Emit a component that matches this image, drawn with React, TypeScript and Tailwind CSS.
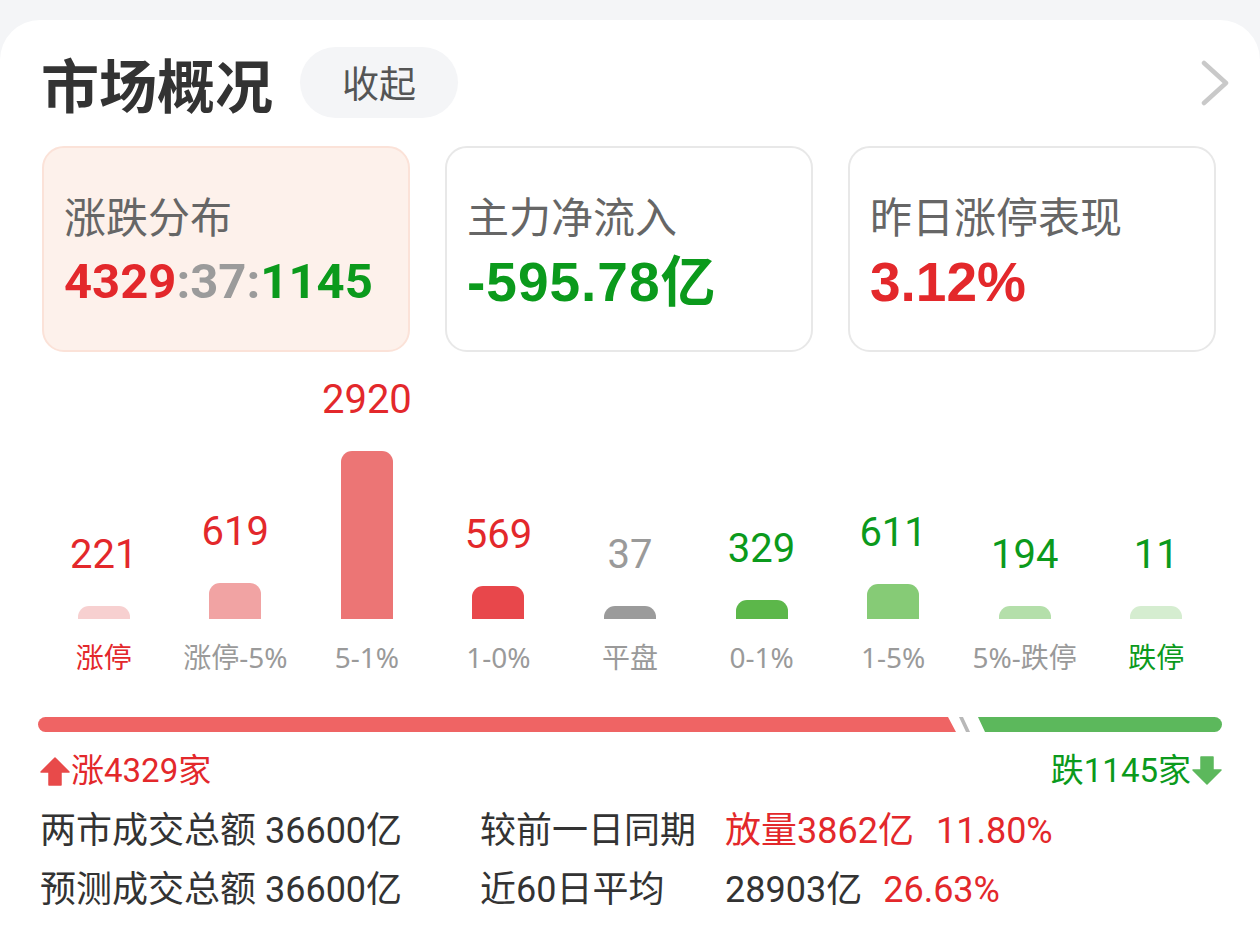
import React from "react";

type Bucket = {
  label: string;
  count: number;
  height: number;
  bar: string;
  num: string;
  labelColor: string;
};

const RED = "text-[#e3282b]";
const GREEN = "text-[#0b9a1c]";
const GRAY = "text-[#9a9a9a]";

const buckets: Bucket[] = [
  { label: "涨停", count: 221, height: 13, bar: "bg-[#f7d0d0]", num: RED, labelColor: RED },
  { label: "涨停-5%", count: 619, height: 36, bar: "bg-[#f1a3a3]", num: RED, labelColor: GRAY },
  { label: "5-1%", count: 2920, height: 168, bar: "bg-[#ec7575]", num: RED, labelColor: GRAY },
  { label: "1-0%", count: 569, height: 33, bar: "bg-[#e8474b]", num: RED, labelColor: GRAY },
  { label: "平盘", count: 37, height: 13, bar: "bg-[#9b9b9b]", num: GRAY, labelColor: GRAY },
  { label: "0-1%", count: 329, height: 19, bar: "bg-[#5cb74a]", num: GREEN, labelColor: GRAY },
  { label: "1-5%", count: 611, height: 35, bar: "bg-[#86cb76]", num: GREEN, labelColor: GRAY },
  { label: "5%-跌停", count: 194, height: 13, bar: "bg-[#b4dfaa]", num: GREEN, labelColor: GRAY },
  { label: "跌停", count: 11, height: 13, bar: "bg-[#d5edd0]", num: GREEN, labelColor: GREEN },
];

function ChevronRight() {
  return (
    <svg width="30" height="46" viewBox="0 0 30 46" fill="none">
      <polyline
        points="4,3 26,23 4,43"
        stroke="#c9c9c9"
        strokeWidth="4.5"
        strokeLinecap="round"
        strokeLinejoin="round"
      />
    </svg>
  );
}

function ArrowUp() {
  return (
    <svg width="30" height="30" viewBox="0 0 30 30">
      <path d="M15 2 L29 16 H21 V29 H9 V16 H1 Z" fill="#e84a4a" strokeLinejoin="round" stroke="#e84a4a" strokeWidth="1.5" />
    </svg>
  );
}

function ArrowDown() {
  return (
    <svg width="30" height="30" viewBox="0 0 30 30">
      <path d="M15 28 L29 14 H21 V1 H9 V14 H1 Z" fill="#5cb85c" strokeLinejoin="round" stroke="#5cb85c" strokeWidth="1.5" />
    </svg>
  );
}

export default function App() {
  return (
    <div className="w-[1260px] h-[939px] overflow-hidden bg-[#f4f5f7] pt-[20px] font-[Roboto,'Noto_Sans_CJK_SC',sans-serif]">
      <div className="h-[919px] rounded-t-[40px] bg-white px-[38px] pt-[27px]">
        {/* header */}
        <div className="flex h-[71px] items-center pl-[3px]">
          <div className="text-[58px] font-bold leading-none text-[#333333] font-['Noto_Sans_CJK_SC',sans-serif]">
            市场概况
          </div>
          <div className="ml-[27px] flex h-[71px] w-[158px] items-center justify-center rounded-full bg-[#f4f5f7] text-[37px] leading-none text-[#555555] font-['Noto_Sans_CJK_SC',sans-serif]">
            收起
          </div>
          <div className="ml-auto mr-[-8px]">
            <ChevronRight />
          </div>
        </div>

        {/* summary cards */}
        <div className="mt-[28px] flex gap-[35px] pl-[4px]">
          <div className="h-[206px] w-[368px] rounded-[22px] border-2 border-[#fbe2d8] bg-[#fdf1eb] pl-[20px] pt-[46px]">
            <div className="text-[42px] leading-none text-[#666666] font-['Noto_Sans_CJK_SC',sans-serif]">涨跌分布</div>
            <div className="mt-[21px] text-[49px] font-bold leading-none font-[Roboto,sans-serif]">
              <span className="text-[#e3282b]">4329</span>
              <span className="text-[#9b9b9b]">:37:</span>
              <span className="text-[#0b9a1c]">1145</span>
            </div>
          </div>
          <div className="h-[206px] w-[368px] rounded-[22px] border-2 border-[#e8e8e8] bg-white pl-[20px] pt-[46px]">
            <div className="text-[42px] leading-none text-[#666666] font-['Noto_Sans_CJK_SC',sans-serif]">主力净流入</div>
            <div className="mt-[19px] text-[55px] font-bold leading-none tracking-[1px] text-[#0b9a1c] font-['Liberation_Sans','Noto_Sans_CJK_SC',sans-serif]">
              -595.78亿
            </div>
          </div>
          <div className="h-[206px] w-[368px] rounded-[22px] border-2 border-[#e8e8e8] bg-white pl-[20px] pt-[46px]">
            <div className="text-[42px] leading-none text-[#666666] font-['Noto_Sans_CJK_SC',sans-serif]">昨日涨停表现</div>
            <div className="mt-[19px] text-[55px] font-bold leading-none text-[#e3282b] font-['Liberation_Sans',sans-serif]">
              3.12%
            </div>
          </div>
        </div>

        {/* distribution chart */}
        <div className="mt-[23px] grid grid-cols-9">
          {buckets.map((b) => (
            <div key={b.label} className="flex flex-col items-center">
              <div className="flex h-[244px] flex-col items-center justify-end">
                <div className={`mb-[31px] text-[40px] leading-none ${b.num}`}>{b.count}</div>
                <div className={`w-[52px] rounded-t-[11px] ${b.bar}`} style={{ height: b.height }} />
              </div>
              <div className={`mt-[24px] whitespace-nowrap text-[28px] leading-none font-['Noto_Sans','Noto_Sans_CJK_SC',sans-serif] ${b.labelColor}`}>{b.label}</div>
            </div>
          ))}
        </div>

        {/* up / down ratio bar */}
        <div className="mt-[46px] flex h-[15px] overflow-hidden rounded-full">
          <div className="flex-1 bg-[#ef6464] [clip-path:polygon(0_0,calc(100%-8px)_0,100%_100%,0_100%)]" />
          <svg width="22" height="15" viewBox="0 0 22 15" className="shrink-0">
            <polygon points="3,0 7,0 14,15 10,15" fill="#b8b8b8" />
          </svg>
          <div className="w-[244px] shrink-0 bg-[#5cb85c] [clip-path:polygon(0_0,100%_0,100%_100%,7px_100%)]" />
        </div>

        <div className="mt-[22px] flex items-center justify-between pl-[2px]">
          <div className="flex items-center">
            <ArrowUp />
            <span className="ml-[1px] text-[33px] leading-none text-[#e3282b]">涨4329家</span>
          </div>
          <div className="flex items-center">
            <span className="mr-[1px] text-[33px] leading-none text-[#0b9a1c]">跌1145家</span>
            <ArrowDown />
          </div>
        </div>

        {/* turnover */}
        <div className="mt-[14px] pl-[2px] text-[36px] leading-none text-[#333333]">
          <div className="flex h-[59px] items-center">
            <div className="w-[440px]">两市成交总额 36600亿</div>
            <div className="w-[245px]">较前一日同期</div>
            <div className="text-[#e3282b]">
              放量3862亿<span className="ml-[22px]">11.80%</span>
            </div>
          </div>
          <div className="flex h-[59px] items-center">
            <div className="w-[440px]">预测成交总额 36600亿</div>
            <div className="w-[245px]">近60日平均</div>
            <div>
              28903亿<span className="ml-[21px] text-[#e3282b]">26.63%</span>
            </div>
          </div>
        </div>
      </div>
    </div>
  );
}
